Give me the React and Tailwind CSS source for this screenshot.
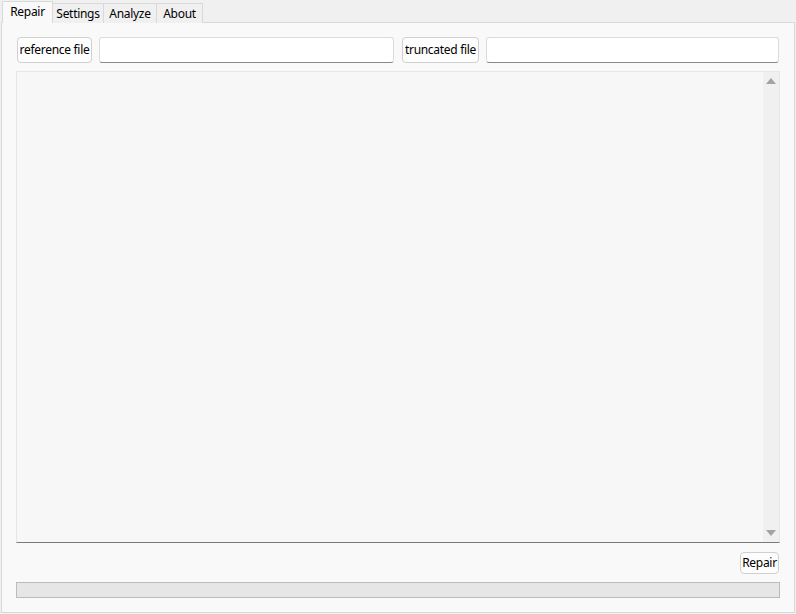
import React from "react";

function Btn({ children, className = "" }) {
  return (
    <div
      className={
        "shrink-0 whitespace-nowrap flex items-center justify-center rounded-[4px] border border-[#d0d0d0] bg-[#fdfdfd] text-[12px] tracking-[-0.3px] text-black leading-none " +
        className
      }
    >
      {children}
    </div>
  );
}

function Field({ className = "" }) {
  return (
    <div
      className={
        "shrink-0 h-[26px] rounded-[3px] border border-[#dcdcdc] border-b-[#8a8a8a] bg-white " + className
      }
    />
  );
}

export default function App() {
  return (
    <div
      className="w-[796px] h-[614px] bg-[#f0f0f0] flex flex-col overflow-hidden"
      style={{ fontFamily: '"Noto Sans", "Open Sans", sans-serif' }}
    >
      {/* tab bar */}
      <div className="flex items-end pl-[2px] pt-[1px] h-[23px] relative z-10 text-[12px] tracking-[-0.3px] text-black">
        <div className="h-[22px] w-[51px] bg-[#f9f9f9] border border-[#d9d9d9] border-b-0 flex items-start justify-center pt-[1px]">
          Repair
        </div>
        <div className="h-[20px] w-[51px] bg-[#f0f0f0] border border-[#d9d9d9] border-l-0 border-b-0 flex items-center justify-center">
          Settings
        </div>
        <div className="h-[20px] w-[53px] bg-[#f0f0f0] border border-[#d9d9d9] border-l-0 border-b-0 flex items-center justify-center">
          Analyze
        </div>
        <div className="h-[20px] w-[46px] bg-[#f0f0f0] border border-[#d9d9d9] border-l-0 border-b-0 flex items-center justify-center">
          About
        </div>
      </div>

      {/* pane */}
      <div className="-mt-px ml-[1px] w-[794px] h-[591px] border border-[#d9d9d9] bg-[#f9f9f9] px-[14px] pt-[14px] flex flex-col">
        <div className="flex items-center pl-[1px]">
          <Btn className="w-[75px] h-[26px]">reference file</Btn>
          <Field className="ml-[7px] w-[295px]" />
          <Btn className="ml-[8px] w-[77px] h-[26px]">truncated file</Btn>
          <Field className="ml-[7px] w-[293px]" />
        </div>

        {/* text area */}
        <div className="mt-[8px] w-[764px] h-[472px] border border-[#e6e6e6] border-b-[#7a7a7a] bg-[#f7f7f7] flex justify-end">
          <div className="w-[16px] h-full bg-[#f0f0f0] flex flex-col items-center justify-between py-[6px]">
            <svg width="10" height="6" viewBox="0 0 10 6">
              <polygon points="5,0 10,6 0,6" fill="#a3a3a3" />
            </svg>
            <svg width="10" height="6" viewBox="0 0 10 6">
              <polygon points="0,0 10,0 5,6" fill="#a3a3a3" />
            </svg>
          </div>
        </div>

        <div className="mt-[9px] flex justify-end pr-[1px]">
          <Btn className="w-[39px] h-[22px]">Repair</Btn>
        </div>

        <div className="mt-[8px] w-[764px] h-[16px] border border-[#bcbcbc] bg-[#e6e6e6]" />
      </div>
    </div>
  );
}
